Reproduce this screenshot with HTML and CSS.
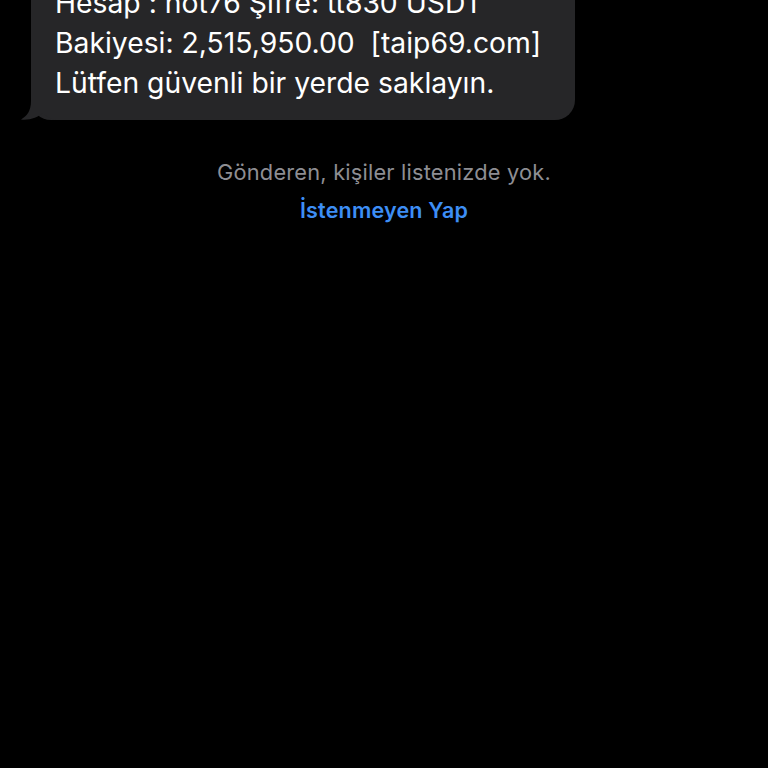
FILE: index.html
```html
<!DOCTYPE html>
<html lang="tr">
<head>
<meta charset="utf-8">
<link rel="stylesheet" href="styles.css">
</head>
<body>
<div class="thread">
  <div class="bubble">
    <p class="msg">Hesap : hot76 Şifre: tt830 USDT<br>Bakiyesi: 2,515,950.00&nbsp; [taip69.com]<br>Lütfen güvenli bir yerde saklayın.</p>
    <svg class="tail" width="40" height="31" viewBox="0 0 40 31"><path d="M10,0 L10,11 C10,21 6,26 0,29.5 C9,30.5 17,27 22,23 C25,26 29,29 35,30 L35,0 Z" fill="#262628"/></svg>
  </div>
  <div class="notice">
    <div class="info">Gönderen, kişiler listenizde yok.</div>
    <div class="action">İstenmeyen Yap</div>
  </div>
</div>
</body>
</html>
```
FILE: styles.css
```css
html, body {
  margin: 0;
  padding: 0;
  background: #000;
  height: 100%;
  overflow: hidden;
}
.thread {
  font-family: Inter, "Liberation Sans", sans-serif;
}
.bubble {
  position: relative;
  margin: -40px 0 0 31px;
  width: 544px;
  box-sizing: border-box;
  background: #262628;
  border-radius: 20px;
  padding: 23px 20px 17px 24px;
}
.msg {
  margin: 0;
  color: #fff;
  font-size: 28.3px;
  line-height: 40px;
  letter-spacing: 0;
}
.tail {
  position: absolute;
  left: -10px;
  bottom: -1px;
  display: block;
}
.notice {
  display: flex;
  flex-direction: column;
  align-items: center;
  margin-top: 38px;
  padding-left: 0;
}
.info {
  color: #8e8e93;
  font-size: 21.8px;
  line-height: 28px;
  letter-spacing: 0.2px;
}
.action {
  color: #3d8ef5;
  font-size: 21.5px;
  font-weight: 600;
  line-height: 28px;
  margin-top: 10px;
  letter-spacing: 0.2px;
}
```
